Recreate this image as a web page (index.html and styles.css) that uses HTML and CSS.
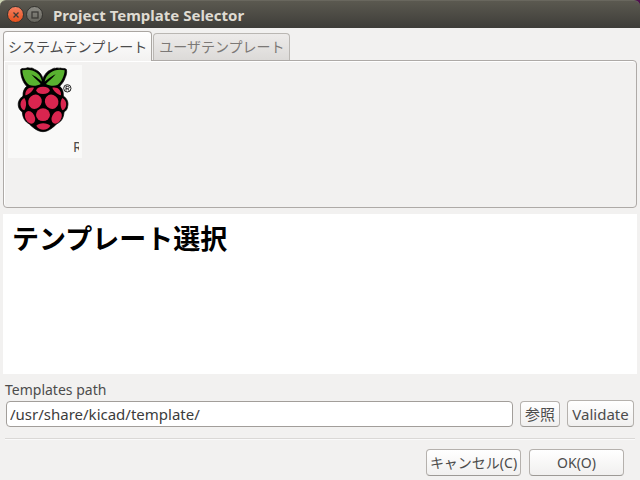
FILE: index.html
```
<!DOCTYPE html>
<html lang="ja">
<head>
<meta charset="utf-8">
<title>Project Template Selector</title>
<link rel="stylesheet" href="styles.css">
</head>
<body>
<div class="backdrop">
<header class="titlebar">
  <button class="wm wm-close" type="button" aria-label="Close">
    <svg viewBox="0 0 16 16" width="16" height="16"><path d="M5.5 5.5l5 5M10.500 5.500l-5 5"/></svg>
  </button>
  <button class="wm wm-max" type="button" aria-label="Maximize">
    <svg viewBox="0 0 16 16" width="16" height="16"><rect x="5" y="5" width="6" height="6"/></svg>
  </button>
  <h1 class="title">Project Template Selector</h1>
</header>
</div>
<main class="dialog">
  <div class="tabs" role="tablist">
    <button class="tab tab-active" type="button" role="tab" aria-selected="true">システムテンプレート</button>
    <button class="tab" type="button" role="tab" aria-selected="false">ユーザテンプレート</button>
  </div>
  <section class="panel" role="tabpanel">
    <button class="template" type="button">
      <svg class="logo" viewBox="48 21 168 198" width="56" height="66" aria-hidden="true">
        <path class="ink" d="M62 28C66 23 75 27 80 24C84 21 89 26 94 24C99 24 102 28 108 30C119 35 126 45 129 56C133 43 142 33 153 29C158 27 161 23 167 25C172 22 176 26 181 24C187 27 194 23 199 28C201 35 200 44 196 52C193 63 186 71 179 79C187 84 191 96 190 108C202 116 206 128 203 139C202 148 198 153 192 156C191 174 184 185 171 191C160 201 146 215 129 215C113 215 99 203 88 192C75 185 68 174 67 156C60 152 56 145 55 138C53 126 58 116 69 108C68 95 73 85 80 79C70 69 61 49 62 28Z"/>
        <g class="leaf">
          <path d="M67 31C83 27 99 30 110 38C119 44 124 53 126 65C121 62 112 52 94 43C106 57 117 65 122 72C112 78 98 79 88 75C75 66 68 48 67 31Z"/>
          <path d="M194 31C177 27 162 30 151 38C142 44 136 53 134 65C140 61 149 52 167 43C155 57 144 65 138 72C149 78 162 79 172 75C185 66 193 48 194 31Z"/>
        </g>
        <g class="berry">
          <ellipse cx="129" cy="91" rx="20" ry="11"/>
          <path d="M76 106C75 91 85 80 102 83C98 93 87 103 76 106Z"/>
          <path d="M183 106C184 91 174 80 157 83C161 93 172 103 183 106Z"/>
          <ellipse cx="105" cy="125" rx="20" ry="22" transform="rotate(28 105 125)"/>
          <ellipse cx="155" cy="125" rx="20" ry="22" transform="rotate(-28 155 125)"/>
          <path d="M73 114C80 123 80 140 73 151C58 146 57 121 73 114Z"/>
          <path d="M187 114C180 123 180 140 187 151C202 146 203 121 187 114Z"/>
          <ellipse cx="129" cy="164" rx="21" ry="19"/>
          <ellipse cx="90" cy="172" rx="14" ry="20" transform="rotate(-28 90 172)"/>
          <ellipse cx="170" cy="172" rx="14" ry="20" transform="rotate(28 170 172)"/>
          <path d="M109 197C116 187 143 187 151 197C143 213 117 213 109 197Z"/>
        </g>
        <circle class="reg" cx="202" cy="85" r="11"/>
        <path class="reg" d="M198 92V79H203C209 79 209 86 203 86H198M203 86L207 92"/>
      </svg>
      <span class="template-name">R</span>
    </button>
  </section>
  <section class="info"><h2>テンプレート選択</h2></section>
  <label class="path-label" for="path">Templates path</label>
  <div class="path-row">
    <input class="path" id="path" type="text" value="/usr/share/kicad/template/">
    <button class="btn btn-browse" type="button">参照</button>
    <button class="btn btn-validate" type="button">Validate</button>
  </div>
  <hr class="rule">
  <div class="actions">
    <button class="btn btn-action" type="button">キャンセル(C)</button>
    <button class="btn btn-action" type="button">OK(O)</button>
  </div>
</main>
</body>
</html>
```
FILE: styles.css
```
* { box-sizing: border-box; }
body {
  margin: 0;
  background: #f2f1f0;
  color: #4c4c4c;
  font: 14px/20px "Noto Sans", "Noto Sans CJK JP", sans-serif;
}
button, input { font: inherit; color: inherit; margin: 0; }
.backdrop { background: linear-gradient(90deg, #cbd3b2 50%, #50104f 50%); }
.titlebar {
  height: 28px;
  padding: 0 7px;
  display: flex;
  align-items: center;
  gap: 2px;
  background: linear-gradient(#5b5950, #3e3d39);
  border-top: 1px solid #69675e;
  border-radius: 6px 6px 0 0;
}
.wm {
  width: 17px;
  height: 17px;
  padding: 0;
  border: 1px solid #34332f;
  border-radius: 50%;
  display: flex;
  align-items: center;
  justify-content: center;
}
.wm svg { flex: none; fill: none; stroke: #3c3b37; stroke-width: 1.3; }
.wm-close { background: linear-gradient(#f58061, #e5501c); }
.wm-max { background: linear-gradient(#8b8a83, #66655e); }
.title {
  margin: 0 0 0 8px;
  color: #dfdbd2;
  font-size: 15px;
  line-height: 20px;
  font-weight: 700;
}
.dialog { padding: 3px 3px 4px; }
.tabs { display: flex; align-items: flex-end; gap: 1px; }
.tab {
  height: 27px;
  padding: 0 5px;
  border: 1px solid #bab7b3;
  border-bottom: 0;
  border-radius: 4px 4px 0 0;
  background: linear-gradient(#edebea, #dcdad8);
  color: #7b7876;
  white-space: nowrap;
}
.tab-active {
  height: 30px;
  margin-bottom: -1px;
  padding: 0 4px;
  background: linear-gradient(#fff, #f2f1f0);
  color: #4c4c4c;
  border-color: #aaa6a2;
  position: relative;
}
.panel {
  height: 148px;
  padding: 4px;
  border: 1px solid #aeaaa7;
  border-radius: 0 4px 4px 4px;
  box-shadow: inset 0 1px #fff, inset 1px 0 #fff;
}
.template {
  width: 74px;
  height: 93px;
  padding: 2px 3px 1px 8px;
  border: 0;
  background: #f9f9f8;
  display: flex;
  flex-direction: column;
  justify-content: space-between;
}
.template-name { align-self: flex-end; width: 6px; overflow: hidden; text-align: left; }
.ink { fill: #000; stroke: #000; stroke-width: 2; }
.leaf { fill: #59b230; }
.berry { fill: #d9254f; }
.reg { fill: none; stroke: #222; stroke-width: 3; }
.info {
  height: 160px;
  margin-top: 6px;
  padding: 4px 9px;
  background: #fff;
  color: #000;
}
.info h2 { margin: 0; font-size: 27px; line-height: 42px; font-weight: 700; }
.path-label { display: block; margin: 6px 2px 0; }
.path-row { display: flex; align-items: center; gap: 7px; padding: 0 3px; font-size: 15px; }
.path {
  flex: 1;
  min-width: 0;
  height: 26px;
  padding: 0 3px;
  border: 1px solid #a29e9a;
  border-radius: 4px;
  background: #fff;
  color: #3c3c3c;
}
.btn {
  height: 27px;
  padding: 0;
  border: 1px solid #b5b1ad;
  border-bottom-color: #9d9a96;
  border-radius: 4px;
  background: linear-gradient(#fff, #f1f0ef);
  white-space: nowrap;
}
.btn-browse { width: 40px; height: 26px; }
.btn-validate { width: 67px; }
.btn-action { width: 95px; }
.rule { margin: 11px 2px 9px; border: 0; border-top: 1px solid #dad8d6; border-bottom: 1px solid #fafafa; }
.actions { display: flex; justify-content: flex-end; gap: 8px; padding: 0 13px; }
```
